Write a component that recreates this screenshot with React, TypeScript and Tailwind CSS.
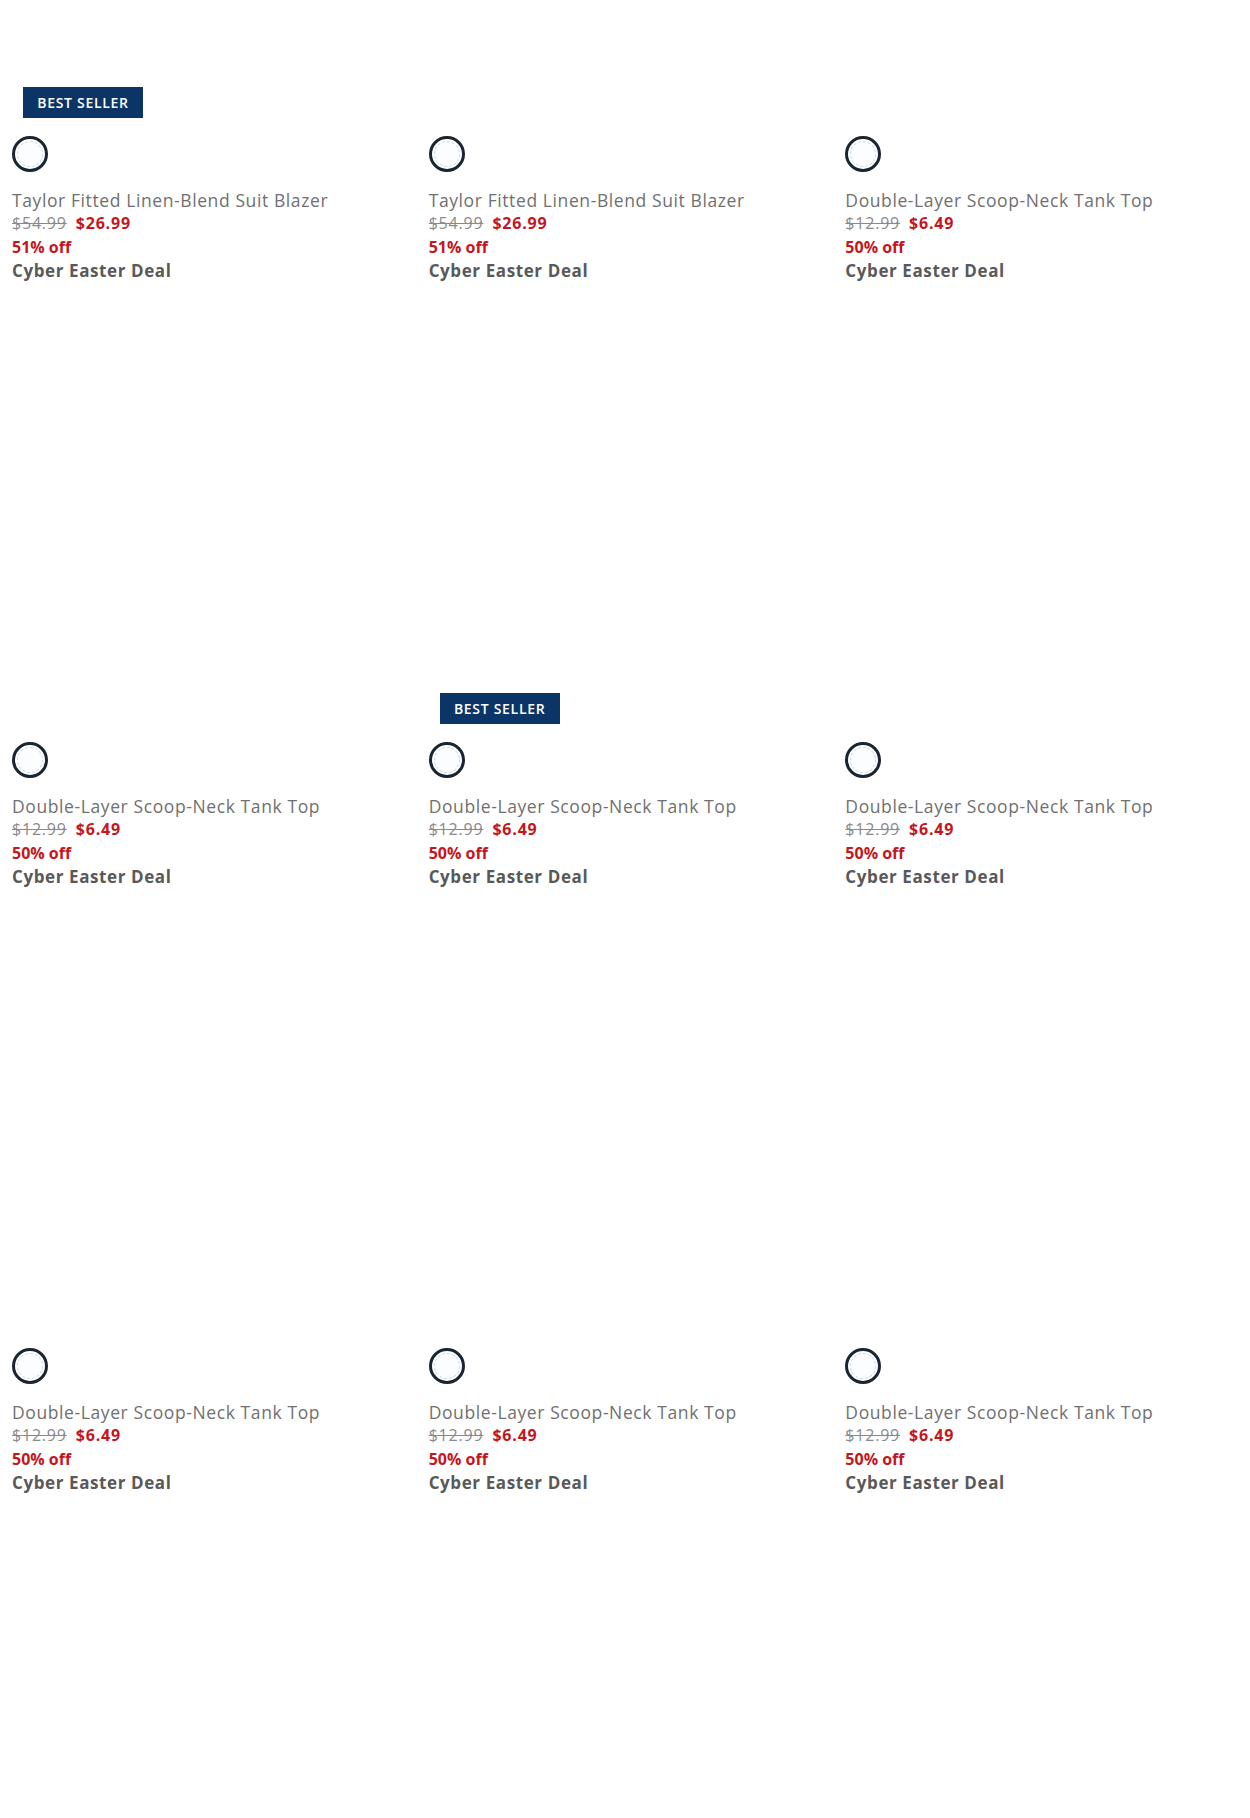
import React from "react";

type Product = {
  title: string;
  was: string;
  now: string;
  off: string;
  badge?: boolean;
};

const blazer: Product = {
  title: "Taylor Fitted Linen-Blend Suit Blazer",
  was: "$54.99",
  now: "$26.99",
  off: "51% off",
};

const tank: Product = {
  title: "Double-Layer Scoop-Neck Tank Top",
  was: "$12.99",
  now: "$6.49",
  off: "50% off",
};

const products: Product[] = [
  { ...blazer, badge: true },
  blazer,
  tank,
  tank,
  { ...tank, badge: true },
  tank,
  tank,
  tank,
  tank,
];

function ProductCard({ product, cropped }: { product: Product; cropped: boolean }) {
  return (
    <div className="flex flex-col pb-5">
      {/* product image area (photos not loaded) */}
      <div className={`relative w-full bg-white ${cropped ? "h-[128px]" : "h-[431px]"}`}>
        {product.badge && (
          <span className="absolute bottom-[10px] left-[23px] flex h-[31px] w-[120px] items-center justify-center bg-[#0b3566] text-[14px] font-semibold tracking-[0.7px] text-white">
            BEST SELLER
          </span>
        )}
      </div>

      <div className="px-3">
        <div className="mt-2 flex h-9 w-9 items-center justify-center rounded-full border-[3px] border-[#1a2530] bg-white">
          <div className="h-[26px] w-[26px] rounded-full border border-dashed border-[#c7dbe8] bg-[#fbfdff]" />
        </div>

        <p className="mt-[17px] text-[17.5px] leading-[22px] tracking-[0.6px] text-[#707070]">{product.title}</p>
        <p className="text-[16px] leading-[24px] tracking-[0.8px]">
          <span className="text-[#8a8a8a] line-through">{product.was}</span>
          <span className="ml-[9px] font-bold text-[#c4161c]">{product.now}</span>
        </p>
        <p className="text-[16px] leading-[24px] font-bold text-[#c4161c]">{product.off}</p>
        <p className="text-[17px] leading-[24px] font-bold tracking-[0.6px] text-[#595959]">Cyber Easter Deal</p>
      </div>
    </div>
  );
}

export default function App() {
  return (
    <div className="min-h-[1818px] bg-white font-['Open_Sans',_'Noto_Sans',_sans-serif]">
      <div className="grid grid-cols-3">
        {products.map((p, i) => (
          <ProductCard key={i} product={p} cropped={i < 3} />
        ))}
      </div>
    </div>
  );
}
